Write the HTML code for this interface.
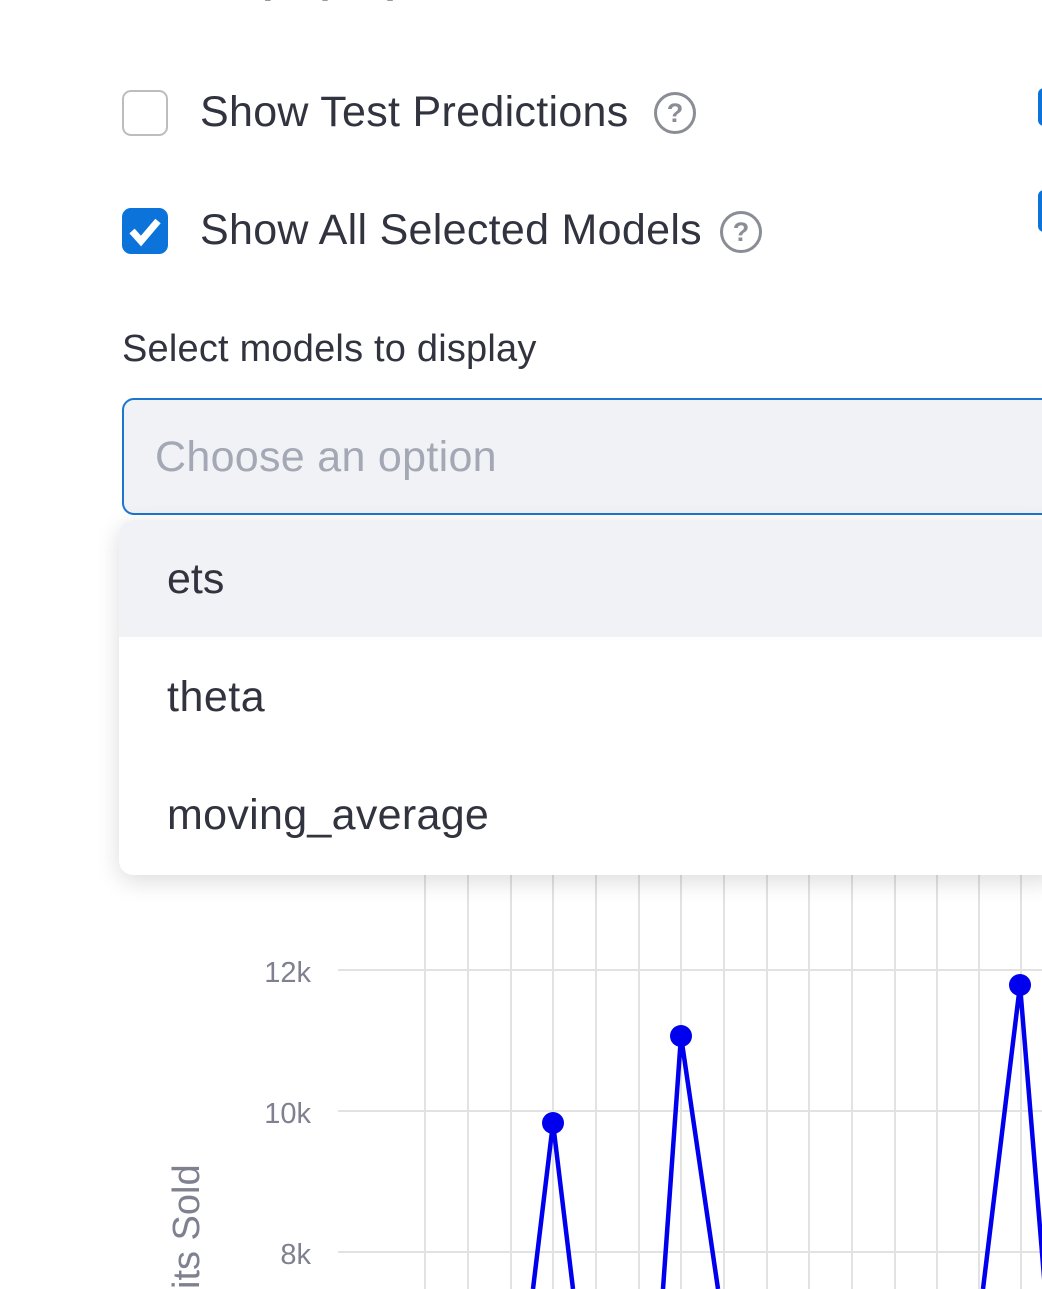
<!DOCTYPE html>
<html><head><meta charset="utf-8"><style>
html,body{margin:0;padding:0;width:1042px;height:1289px;overflow:hidden;background:#fff;font-family:"Liberation Sans",sans-serif;color:#31333f;position:relative}
.a{position:absolute;white-space:nowrap}
.cb{position:absolute;width:46px;height:46px;border-radius:9px;box-sizing:border-box}
.help{position:absolute;width:42px;height:42px;border:3px solid #8b8d95;border-radius:50%;box-sizing:border-box;color:#8b8d95;font-size:27px;font-weight:bold;text-align:center;line-height:36px}
</style></head><body>
<svg class="a" style="left:0;top:0" width="1042" height="1289">
<g stroke="#e2e2e2" stroke-width="2">
<line x1="338" y1="970" x2="1042" y2="970"/><line x1="338" y1="1111" x2="1042" y2="1111"/><line x1="338" y1="1252" x2="1042" y2="1252"/>
<line x1="425" y1="860" x2="425" y2="1289"/><line x1="468" y1="860" x2="468" y2="1289"/><line x1="511" y1="860" x2="511" y2="1289"/><line x1="553" y1="860" x2="553" y2="1289"/><line x1="596" y1="860" x2="596" y2="1289"/><line x1="639" y1="860" x2="639" y2="1289"/><line x1="681" y1="860" x2="681" y2="1289"/><line x1="724" y1="860" x2="724" y2="1289"/><line x1="767" y1="860" x2="767" y2="1289"/><line x1="809" y1="860" x2="809" y2="1289"/><line x1="852" y1="860" x2="852" y2="1289"/><line x1="895" y1="860" x2="895" y2="1289"/><line x1="937" y1="860" x2="937" y2="1289"/><line x1="979" y1="860" x2="979" y2="1289"/><line x1="1021" y1="860" x2="1021" y2="1289"/>
</g>
<g stroke="#0000ee" stroke-width="4.5" fill="none">
<polyline points="533,1289 553,1123 573,1289"/><polyline points="663,1289 681,1036 718,1289"/><polyline points="983,1289 1020,985 1045,1289"/>
</g>
<g fill="#0000ee"><circle cx="553" cy="1123" r="11"/><circle cx="681" cy="1036" r="11"/><circle cx="1020" cy="985" r="11"/></g>
<g fill="#7f8190" font-family="Liberation Sans" font-size="29" text-anchor="end">
<text x="311" y="982">12k</text><text x="311" y="1123">10k</text><text x="311" y="1264">8k</text>
</g>
<text transform="translate(199,1289) rotate(-90)" fill="#7f8190" font-family="Liberation Sans" font-size="38">its Sold</text>
</svg>
<div class="a" style="left:200px;top:-43px;font-size:40px;font-weight:bold">Display Options</div>
<div class="cb" style="left:122px;top:90px;border:2px solid #bdbdbd;background:#fff"></div>
<div class="a" style="left:200px;top:88px;font-size:43px;letter-spacing:0.3px">Show Test Predictions</div>
<div class="help" style="left:654px;top:92px">?</div>
<div class="cb" style="left:122px;top:208px;background:#0b73d9"><svg width="46" height="46"><polyline points="10,23 19,33 36,13" stroke="#fff" stroke-width="7" fill="none"/></svg></div>
<div class="a" style="left:200px;top:206px;font-size:43px;letter-spacing:0.3px">Show All Selected Models</div>
<div class="help" style="left:720px;top:211px">?</div>
<div class="a" style="left:1038px;top:88px;width:12px;height:38px;background:#0b73d9;border-radius:6px"></div>
<div class="a" style="left:1038px;top:190px;width:12px;height:42px;background:#0b73d9;border-radius:6px"></div>
<div class="a" style="left:122px;top:328px;font-size:38px;letter-spacing:0.2px">Select models to display</div>
<div class="a" style="left:122px;top:398px;width:940px;height:117px;box-sizing:border-box;border:2px solid #1c75d1;border-radius:12px;background:#f0f2f6"></div>
<div class="a" style="left:155px;top:433px;font-size:43px;letter-spacing:0.3px;color:#a3a8b4">Choose an option</div>
<div class="a" style="left:119px;top:520px;width:940px;height:355px;background:#fff;border-radius:14px;box-shadow:0 6px 24px rgba(0,0,0,0.14);overflow:hidden">
<div style="height:117px;background:#f0f2f6"></div>
</div>
<div class="a" style="left:167px;top:555px;font-size:43px">ets</div>
<div class="a" style="left:167px;top:673px;font-size:43px;letter-spacing:0.5px">theta</div>
<div class="a" style="left:167px;top:791px;font-size:43px;letter-spacing:0.3px">moving_average</div>
</body></html>
